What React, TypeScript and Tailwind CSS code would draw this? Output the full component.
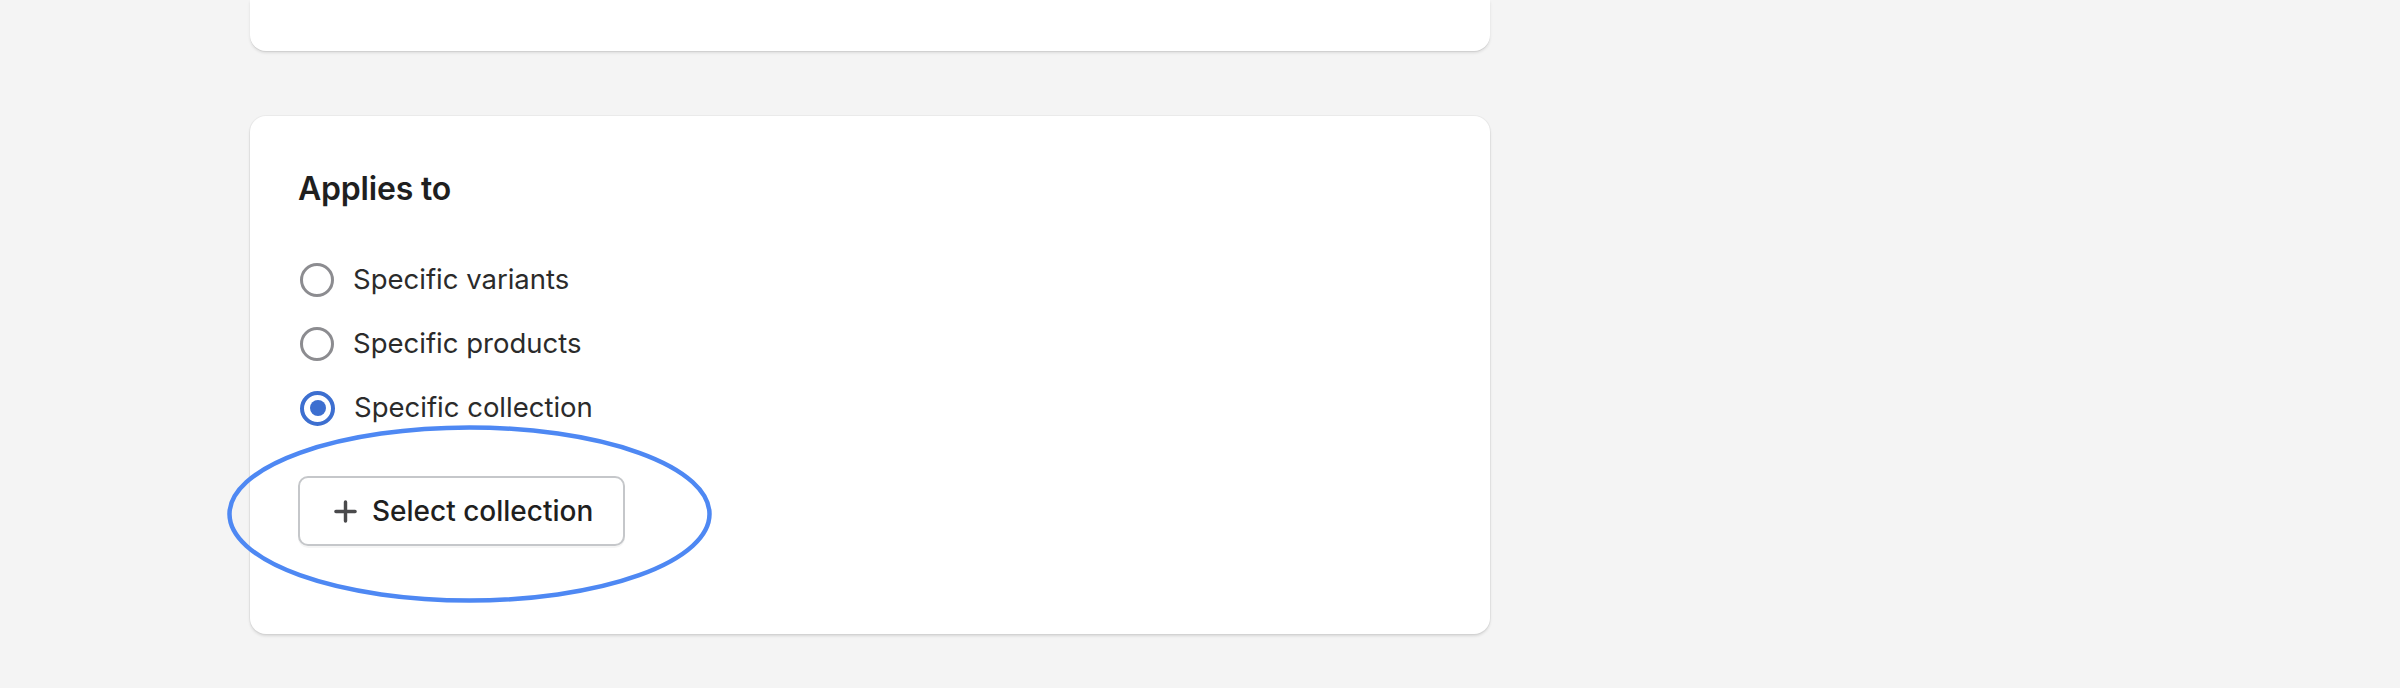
import { useState } from 'react'

const options = ['Specific variants', 'Specific products', 'Specific collection']

function Radio({ checked }: { checked: boolean }) {
  return (
    <span
      className={
        checked
          ? 'ml-[2px] flex items-center justify-center w-[35px] h-[35px] rounded-full border-[4px] border-[#3d6fd0]'
          : 'ml-[2px] flex items-center justify-center w-[34px] h-[34px] rounded-full border-[3.5px] border-[#8c8c90]'
      }>
      {checked && <span className="block w-[16px] h-[16px] rounded-full bg-[#3d6fd0]" />}
    </span>
  )
}

export default function App() {
  const [selected, setSelected] = useState(2)

  return (
    <div className="min-h-[688px] bg-[#f4f4f4] font-['Inter',sans-serif] pl-[250px]">
      {/* card above, scrolled mostly out of view */}
      <div className="w-[1240px] h-[51px] bg-white rounded-b-[16px] shadow-[0_1px_0_rgba(0,0,0,0.06),0_2px_3px_rgba(0,0,0,0.1)]" />

      <div className="relative mt-[65px] w-[1240px] h-[518px] bg-white rounded-[16px] shadow-[0_0_0_1px_rgba(0,0,0,0.035),0_2px_3px_rgba(0,0,0,0.12)] pl-[48px] pt-[53px]">
        <h2 className="text-[32px] leading-[40px] font-semibold text-[#1f1f1f] tracking-[-0.2px]">
          Applies to
        </h2>

        <div className="mt-[39px] flex flex-col">
          {options.map((label, index) => (
            <label
              key={index}
              onClick={() => setSelected(index)}
              className="flex items-center h-[64px] gap-[19px] cursor-pointer">
              <Radio checked={selected === index} />
              <span className="text-[27.5px] text-[#2b2b2b]">{label}</span>
            </label>
          ))}
        </div>

        <button className="mt-[36px] flex items-center gap-[15px] h-[70px] w-[327px] pl-[34px] border-2 border-[#c5c7ca] rounded-[10px] bg-white shadow-[0_2px_0_rgba(0,0,0,0.04)]">
          <svg width="23" height="23" viewBox="0 0 24 24" fill="none">
            <path
              d="M12 2v20M2 12h20"
              stroke="#4a4a4c"
              strokeWidth="3.6"
              strokeLinecap="round"
            />
          </svg>
          <span className="text-[28px] font-medium text-[#1f1f1f]">Select collection</span>
        </button>

        {/* hand-drawn highlight around the button */}
        <svg
          className="absolute left-[-23px] top-[309px] pointer-events-none"
          width="485"
          height="178"
          viewBox="0 0 485 178">
          <ellipse cx="242.5" cy="89" rx="240" ry="86.5" fill="none" stroke="#4e88f3" strokeWidth="4.5" />
        </svg>
      </div>
    </div>
  )
}
